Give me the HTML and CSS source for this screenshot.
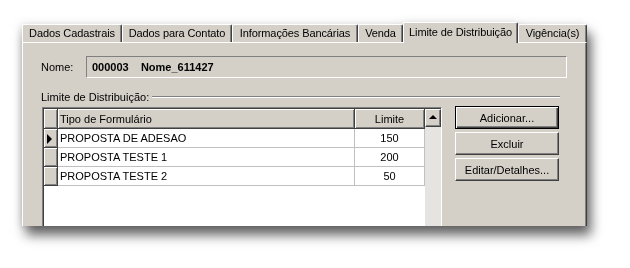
FILE: index.html
```html
<!DOCTYPE html>
<html lang="pt">
<head>
  <meta charset="UTF-8">
  <title>Limite de Distribuição</title>
  <link rel="stylesheet" href="styles.css">
</head>
<body>
  <div class="shot">
  <div class="window">
    <div class="tabs">
      <div class="tab">Dados Cadastrais</div>
      <div class="tab">Dados para Contato</div>
      <div class="tab">Informações Bancárias</div>
      <div class="tab">Venda</div>
      <div class="tab active">Limite de Distribuição</div>
      <div class="tab">Vigência(s)</div>
    </div>

    <div class="panel">
      <div class="name-row">
        <span class="name-label">Nome:</span>
        <div class="name-field">000003&nbsp;&nbsp;&nbsp;&nbsp;Nome_611427</div>
      </div>

      <div class="group-title">
        <span>Limite de Distribuição:</span>
        <div class="group-line"></div>
      </div>

      <div class="group-body">
        <div class="grid">
          <div class="grid-area">
            <table class="grid-table">
              <tr>
                <th class="ind"></th>
                <th class="col-tipo">Tipo de Formulário</th>
                <th class="col-limite">Limite</th>
              </tr>
              <tr>
                <td class="ind"><span class="pointer"></span></td>
                <td>PROPOSTA DE ADESAO</td>
                <td class="num">150</td>
              </tr>
              <tr>
                <td class="ind"></td>
                <td>PROPOSTA TESTE 1</td>
                <td class="num">200</td>
              </tr>
              <tr>
                <td class="ind"></td>
                <td>PROPOSTA TESTE 2</td>
                <td class="num">50</td>
              </tr>
            </table>
          </div>
          <div class="scrollbar">
            <div class="scroll-btn"><span class="arrow-up"></span></div>
            <div class="scroll-track"></div>
          </div>
        </div>

        <div class="buttons">
          <button class="btn default">Adicionar...</button>
          <button class="btn">Excluir</button>
          <button class="btn">Editar/Detalhes...</button>
        </div>
      </div>
    </div>
  </div>
  </div>
</body>
</html>
```

FILE: styles.css
```css
/* Page */
body {
  margin: 0;
  background: #fff;
  font-family: "Liberation Sans", Arial, sans-serif;
  font-size: 11px;
  color: #000;
}

/* Screenshot frame, the shadow follows the tabs and the page */
.shot {
  padding: 21px 40px 40px 22px;
  width: 565px;
}

.window {
  width: 565px;
  height: 205px;
  overflow: hidden;
  filter: drop-shadow(-2px 0 4px rgba(0, 0, 0, 0.12)) drop-shadow(4px 9px 6px rgba(0, 0, 0, 0.6));
}

/* Tab strip */
.tabs {
  display: flex;
  align-items: flex-end;
  height: 21px;
}

.tab {
  height: 17px;
  line-height: 17px;
  box-sizing: content-box;
  text-align: center;
  background: #d4d0c8;
  border-top: 1px solid #fff;
  border-left: 1px solid #fff;
  border-right: 1px solid #404040;
  box-shadow: inset -1px 0 #808080;
  border-radius: 2px 2px 0 0;
  white-space: nowrap;
  overflow: hidden;
  letter-spacing: -0.1px;
}

.tab:nth-child(1) { width: 98px; }
.tab:nth-child(2) { width: 108px; }
.tab:nth-child(3) { width: 124px; }
.tab:nth-child(4) { width: 43px; }
.tab:nth-child(5) { width: 113px; }
.tab:nth-child(6) { width: 67px; }

.tab.active {
  height: 20px;
  line-height: 18px;
  position: relative;
  z-index: 1;
  margin-bottom: -1px;
}

/* Tab page */
.panel {
  height: 184px;
  background: #d4d0c8;
  border-top: 1px solid #fff;
  border-left: 1px solid #fff;
  border-right: 1px solid #404040;
  box-shadow: inset -1px 0 #808080;
  padding: 13px 19px 0 18px;
  box-sizing: border-box;
}

/* Nome */
.name-row {
  display: flex;
  align-items: center;
}

.name-label {
  width: 45px;
}

.name-field {
  flex: 1;
  height: 22px;
  line-height: 20px;
  box-sizing: border-box;
  padding-left: 5px;
  border: 1px solid;
  border-color: #808080 #fff #fff #808080;
  font-weight: bold;
}

/* Group box title */
.group-title {
  display: flex;
  align-items: center;
  margin-top: 12px;
  height: 13px;
  padding-right: 7px;
}

.group-line {
  flex: 1;
  margin-left: 3px;
  height: 0;
  border-top: 1px solid #808080;
  border-bottom: 1px solid #fff;
}

.group-body {
  display: flex;
  align-items: flex-start;
  margin-top: 4px;
  padding-left: 1px;
}

/* Grid */
.grid {
  width: 400px;
  height: 130px;
  display: flex;
  box-sizing: border-box;
  border: 1px solid;
  border-color: #808080 #fff #fff #808080;
  box-shadow: inset 1px 1px #404040;
  padding: 1px 0 0 1px;
}

.grid-area {
  flex: 1;
  background: #fff;
}

.grid-table {
  border-collapse: collapse;
  width: 381px;
}

.grid-table th,
.grid-table td {
  height: 18px;
  padding: 0 2px;
  font-weight: normal;
  text-align: left;
  white-space: nowrap;
  border-right: 1px solid #c0c0c0;
  border-bottom: 1px solid #c0c0c0;
}

.grid-table th {
  height: 19px;
  background: #d4d0c8;
  border-right: 1px solid #404040;
  border-bottom: 1px solid #404040;
  box-shadow: inset 1px 1px #fff, inset -1px -1px #808080;
}

.grid-table .ind {
  width: 9px;
  background: #d4d0c8;
  border-right: 1px solid #404040;
  border-bottom: 1px solid #404040;
  box-shadow: inset 1px 1px #fff, inset -1px -1px #808080;
  position: relative;
}

.col-tipo {
  width: 292px;
}

.grid-table .col-limite,
.grid-table .num {
  text-align: center;
}

.pointer {
  position: absolute;
  left: 3px;
  top: 5px;
  border-left: 5px solid #000;
  border-top: 5px solid transparent;
  border-bottom: 5px solid transparent;
}

/* Scroll bar */
.scrollbar {
  width: 16px;
  display: flex;
  flex-direction: column;
  background: #e6e4e0;
}

.scroll-btn {
  height: 18px;
  background: #d4d0c8;
  box-sizing: border-box;
  border: 1px solid;
  border-color: #fff #404040 #404040 #fff;
  box-shadow: inset -1px -1px #808080;
  display: flex;
  align-items: center;
  justify-content: center;
}

.arrow-up {
  border-bottom: 4px solid #000;
  border-left: 4px solid transparent;
  border-right: 4px solid transparent;
  margin-top: -2px;
}

.scroll-track {
  flex: 1;
}

/* Buttons */
.buttons {
  display: flex;
  flex-direction: column;
  gap: 3px;
  margin-left: 13px;
  margin-top: -1px;
}

.btn {
  width: 104px;
  height: 23px;
  font-family: inherit;
  font-size: 11px;
  color: #000;
  background: #d4d0c8;
  border: 1px solid;
  border-color: #fff #404040 #404040 #fff;
  box-shadow: inset -1px -1px #808080;
  padding: 0;
}

.btn.default {
  border: 1px solid #000;
  box-shadow: inset 1px 1px #fff, inset -1px -1px #404040, inset -2px -2px #808080;
}
```
